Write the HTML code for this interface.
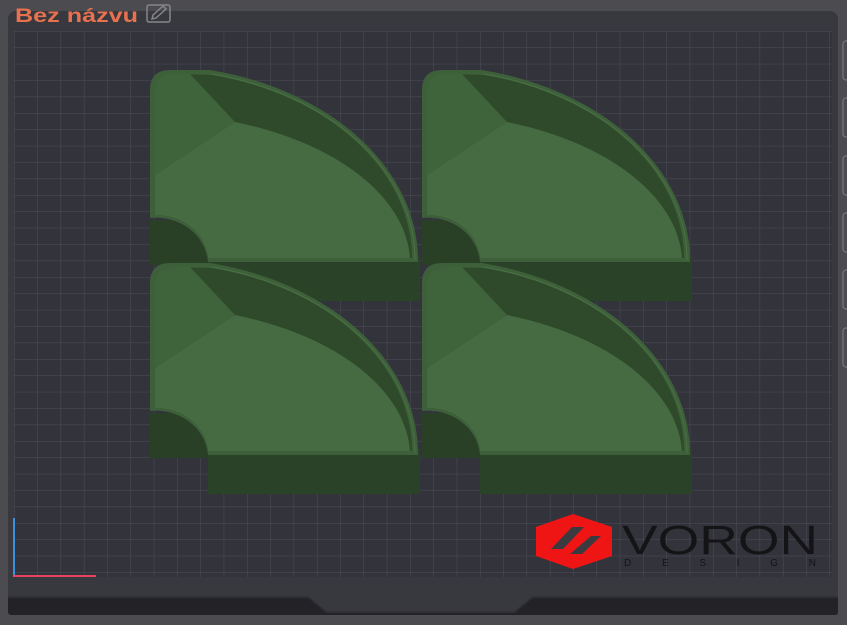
<!DOCTYPE html>
<html><head><meta charset="utf-8"><style>
html,body{margin:0;padding:0;background:#4b4b50;width:847px;height:625px;overflow:hidden}
svg{display:block}
</style></head><body>
<svg width="847" height="625" viewBox="0 0 847 625" xmlns="http://www.w3.org/2000/svg">
<defs>
<pattern id="g" x="14" y="31" width="23.3" height="16.4" patternUnits="userSpaceOnUse">
<path d="M0,0 H23.3 M0,0 V16.4" stroke="#4d4d58" stroke-width="1" fill="none"/>
</pattern>
<g id="tray">
 <rect x="58" y="185" width="212" height="46" fill="#2a4227"/>
 <path d="M0,150 L58,150 L58,195 L0,195 Z" fill="#294026"/>
 <path d="M0,20 Q0,0 20,0 L60,0 A265 195 0 0 1 268,192 L58,192 A52 48 0 0 0 0,148 Z" fill="#3d5f39"/>
 <path d="M5,20 Q5,5 22,4 L62,5 A258 188 0 0 1 262,188 L58,188 A52 46 0 0 0 5,145 Z" fill="#2e4a2b"/>
 <path d="M62,4 A262 191 0 0 1 265,190" fill="none" stroke="#4a7045" stroke-width="1"/>
 <path d="M5,20 Q5,5 22,4 L40,4 L85,52 L5,105 Z" fill="#3f633b"/>
 <path d="M5,105 L85,52 A262 151 0 0 1 260,188 L58,188 A52 46 0 0 0 5,145 Z" fill="#466b42"/>
</g>
</defs>
<rect x="8" y="11" width="830" height="604" rx="8" fill="#38383f"/>
<rect x="14" y="31" width="818" height="546" fill="#33333b"/>
<rect x="14" y="31" width="818" height="546" fill="url(#g)"/>
<path d="M8,598 L308,598 L326,613 L515,613 L533,598 L838,598 L838,612 Q838,615 835,615 L12,615 Q8,615 8,612 Z" fill="#232327"/>
<path d="M8,597 L308,597 L326,612 L515,612 L533,597 L838,597" fill="none" stroke="#2c2c31" stroke-width="1.5"/>
<g fill="none" stroke="#77777c" stroke-width="1.2">
<rect x="843" y="41" width="12" height="39" rx="3"/>
<rect x="843" y="98" width="12" height="39" rx="3"/>
<rect x="843" y="156" width="12" height="39" rx="3"/>
<rect x="843" y="213" width="12" height="39" rx="3"/>
<rect x="843" y="270" width="12" height="39" rx="3"/>
<rect x="843" y="328" width="12" height="39" rx="3"/>
</g>
<line x1="14" y1="518" x2="14" y2="577" stroke="#3d8fe0" stroke-width="2"/>
<line x1="14" y1="576" x2="96" y2="576" stroke="#e8435a" stroke-width="2"/>
<use href="#tray" x="150" y="70"/>
<use href="#tray" x="422" y="70"/>
<use href="#tray" x="150" y="263"/>
<use href="#tray" x="422" y="263"/>
<path d="M573,514 L612,527 L612,556 L573,569 L536,556 L536,527 Z" fill="#f01515"/>
<path d="M551,549 L572,527 L584,527 L563,549 Z" fill="#3a3a40"/>
<path d="M570,554 L591,536 L601,536 L582,554 Z" fill="#3a3a40"/>
<text x="622" y="554" font-family="Liberation Sans, sans-serif" font-size="41" fill="#141417" textLength="196" lengthAdjust="spacingAndGlyphs">VORON</text>
<text x="624" y="566" font-family="Liberation Sans, sans-serif" font-size="10" fill="#141417" textLength="192" lengthAdjust="spacing">DESIGN</text>
<text x="15" y="22" font-family="Liberation Sans, sans-serif" font-weight="bold" font-size="19" fill="#e8714f" textLength="123" lengthAdjust="spacingAndGlyphs">Bez názvu</text>
<g fill="none" stroke="#85858a" stroke-width="1.5">
<rect x="147" y="5" width="23" height="17" rx="2"/>
<path d="M152,19 L153,15 L163,6 L166,9 L156,18 Z"/>
</g>
</svg>
</body></html>
